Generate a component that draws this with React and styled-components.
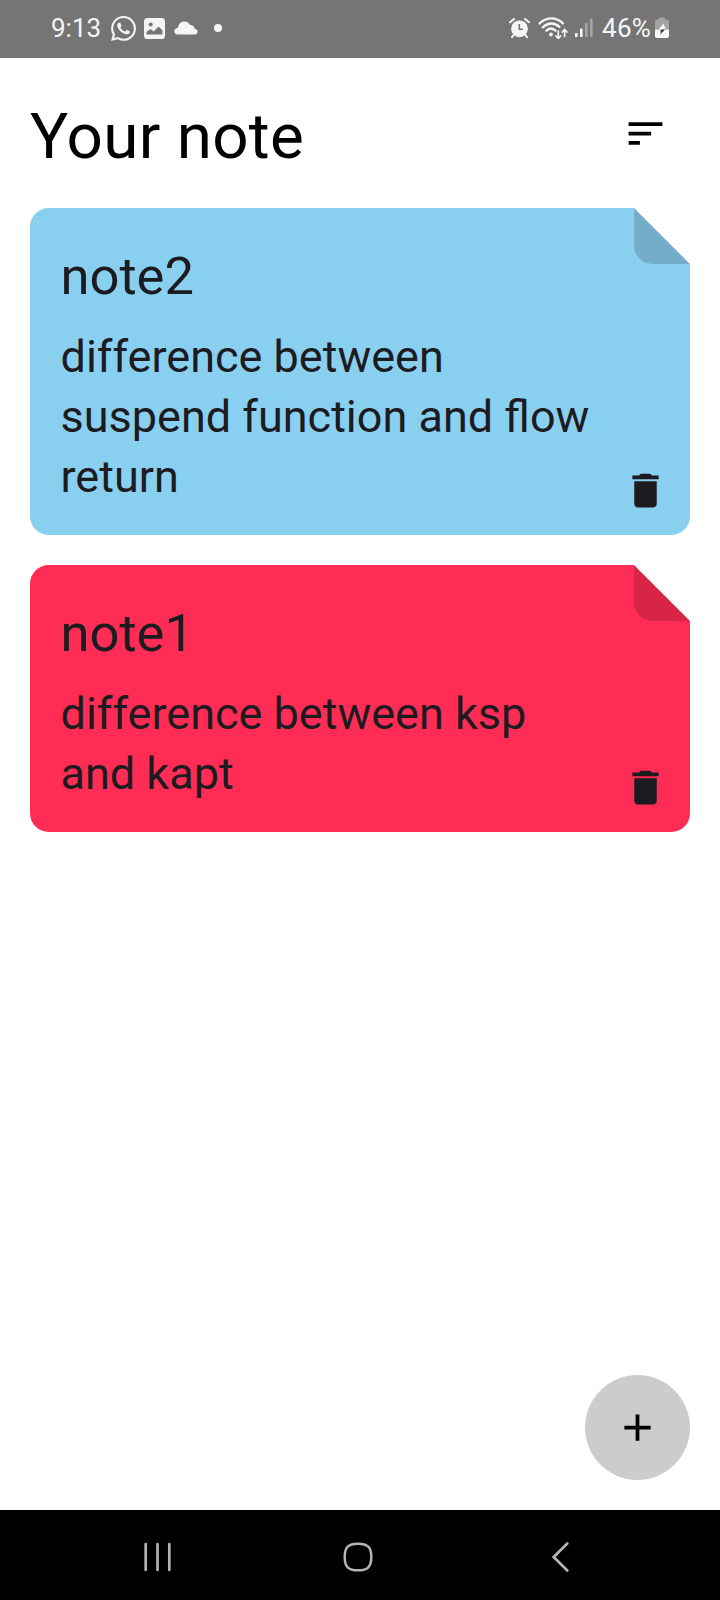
import React from "react";
import styled, { createGlobalStyle } from "styled-components";
import { SiWhatsapp } from "react-icons/si";

const GlobalStyle = createGlobalStyle`
  * { box-sizing: border-box; }
  body { margin: 0; background: #fff; font-family: Roboto, "Liberation Sans", sans-serif; }
  button { border: 0; padding: 0; background: none; font: inherit; color: inherit; }
  svg { display: block; flex: none; }
`;

const Screen = styled.div`
  width: 720px;
  height: 1600px;
  display: flex;
  flex-direction: column;
  background: #fff;
  overflow: hidden;
`;

const StatusBar = styled.header`
  flex: none;
  height: 58px;
  padding: 0 51px 2px;
  display: flex;
  align-items: center;
  justify-content: space-between;
  background: #757575;
  color: #f5f5f5;
`;

const StatusGroup = styled.div`
  display: flex;
  align-items: center;
`;

const StatusText = styled.span`
  width: ${(p) => p.$width}px;
  font-size: 26px;
  line-height: 30px;
  letter-spacing: ${(p) => p.$tracking}px;
  white-space: nowrap;
`;

const StatusIcon = styled.span`
  margin-left: ${(p) => p.$gap}px;
`;

const Content = styled.main`
  flex: 1;
  min-height: 0;
  padding: 30px;
  display: flex;
  flex-direction: column;
`;

const TitleRow = styled.div`
  flex: none;
  height: 90px;
  margin-bottom: 30px;
  display: flex;
  align-items: center;
  justify-content: space-between;
`;

const PageTitle = styled.h1`
  margin: 0;
  padding-top: 7px;
  font-size: 63.75px;
  line-height: 83px;
  font-weight: 400;
  letter-spacing: 0.3px;
  color: #000;
`;

const IconButton = styled.button`
  flex: none;
  width: 90px;
  height: 90px;
  display: flex;
  align-items: center;
  justify-content: center;
`;

const NoteList = styled.div`
  display: flex;
  flex-direction: column;
  gap: 30px;
`;

const NoteCard = styled.article`
  position: relative;
  padding: 32px 90px 28px 30.5px;
  border-radius: 18.75px;
  background: ${(p) => p.$color};
  color: #1c1b1f;
  clip-path: polygon(0 0, calc(100% - 56.25px) 0, 100% 56.25px, 100% 100%, 0 100%);

  &::after {
    content: "";
    position: absolute;
    top: 0;
    right: 0;
    width: 56.25px;
    height: 56.25px;
    border-bottom-left-radius: 18.75px;
    background: ${(p) => p.$fold};
  }
`;

const NoteTitle = styled.h2`
  margin: 0;
  height: 87px;
  font-size: 52.5px;
  line-height: 72px;
  font-weight: 400;
`;

const NoteText = styled.p`
  margin: 0;
  font-size: 45px;
  line-height: 60px;
`;

const DeleteButton = styled(IconButton)`
  position: absolute;
  right: 0;
  bottom: 0;
`;

const AddButton = styled.button`
  flex: none;
  width: 105px;
  height: 105px;
  margin: auto 0 0 auto;
  border-radius: 50%;
  display: flex;
  align-items: center;
  justify-content: center;
  background: #ccc;
`;

const NavBar = styled.nav`
  flex: none;
  height: 90px;
  padding: 3px 151px 0 143px;
  display: flex;
  align-items: center;
  justify-content: space-between;
  background: #000;
`;

const NavHome = styled.span`
  margin-right: 8px;
`;

const MaterialIcon = ({ d }) => (
  <svg width="45" height="45" viewBox="0 0 24 24" fill="currentColor">
    <path d={d} />
  </svg>
);

const SORT = "M3 18h6v-2H3v2zM3 6v2h18V6H3zm0 7h12v-2H3v2z";
const DELETE = "M6 19c0 1.1.9 2 2 2h8c1.1 0 2-.9 2-2V7H6v12zM19 4h-3.5l-1-1h-5l-1 1H5v2h14V4z";
const ADD = "M19 13h-6v6h-2v-6H5v-2h6V5h2v6h6v2z";

const PictureIcon = () => (
  <svg width="21" height="21" viewBox="0 0 21 21">
    <rect width="21" height="21" rx="3.6" fill="currentColor" />
    <circle cx="6.7" cy="6.6" r="2" fill="#757575" />
    <path d="M2.5 16.5V14l4-3 3.2 2.6 4.8-5.2 4 4.1v4z" fill="#757575" />
  </svg>
);

const CloudIcon = () => (
  <svg width="24" height="14" viewBox="0 0 24 14" fill="currentColor">
    <path d="M3.8 13.5C1.5 13.5.3 12 .3 10.2.3 8.4 1.9 7 3.8 7 4.3 3 7 .4 10.4.4c2.8 0 4.7 1.4 5.7 3.7 2.6-.1 4.3 1.5 4.6 3.7 1.8.2 2.9 1.3 2.9 2.9 0 1.7-1.2 2.8-3 2.8z" />
  </svg>
);

const DotIcon = () => (
  <svg width="8" height="8" viewBox="0 0 8 8" fill="currentColor">
    <circle cx="4" cy="4" r="4" />
  </svg>
);

const AlarmIcon = () => (
  <svg width="21" height="21" viewBox="0 0 21 21" fill="none">
    <circle cx="10.5" cy="10.8" r="8.4" fill="currentColor" />
    <path d="M1 4.3 5 1M16 1l4 3.3M5 16.5l-2 2.7M16 16.5l2 2.7" stroke="currentColor" strokeWidth="2" strokeLinecap="round" />
    <path d="M10.3 6v5.3H14" stroke="#757575" strokeWidth="1.6" />
  </svg>
);

const WifiIcon = () => (
  <svg width="30" height="22" viewBox="0 0 30 22" fill="none" stroke="currentColor" strokeWidth="2.3" strokeLinecap="round">
    <path d="M1.5 6.5C8.5-.4 18.300-.4 25 6.5M4.800 10.300c5.200-5 11.700-5 16.600-.5M8.500 13.700c2.800-2.600 6.300-2.600 9 0" />
    <circle cx="13" cy="17.5" r="1.9" fill="currentColor" stroke="none" />
    <path d="M20.3 14v7M18 19l2.300 2.500L22.600 19M26.600 19.500V13M24.300 15l2.300-2.500L28.900 15" strokeWidth="1.7" />
  </svg>
);

const SignalIcon = () => (
  <svg width="18" height="20" viewBox="0 0 18 20" fill="currentColor">
    <rect x="0" y="15" width="2.6" height="4" rx=".6" />
    <rect x="5" y="10.5" width="2.6" height="8.5" rx=".6" />
    <rect x="10" y="5" width="2.6" height="14" rx=".6" opacity=".38" />
    <rect x="15" y=".5" width="2.6" height="18.5" rx=".6" opacity=".38" />
  </svg>
);

const BatteryIcon = () => (
  <svg width="14" height="22" viewBox="0 0 14 22">
    <path d="M4 .5h6v2h2c1.200 0 2 .8 2 2v8H0v-8c0-1.200.8-2 2-2h2z" fill="#a4a4a4" />
    <path d="M0 12.500h14V19c0 1.200-.8 2-2 2H2c-1.200 0-2-.8-2-2z" fill="#fafafa" />
    <path d="M8.500 6.500 3.700 12.500H7l3.600-.2z" fill="#fafafa" />
    <path d="M7 12.500h3L5 17.800l1.200-3.500H4.300z" fill="#333" />
  </svg>
);

const RecentsIcon = () => (
  <svg width="29" height="30" viewBox="0 0 29 30" stroke="#b4b4b4" strokeWidth="2.7" strokeLinecap="round">
    <path d="M2.700 2v26M14.500 2v26M26.300 2v26" />
  </svg>
);

const HomeIcon = () => (
  <svg width="30" height="30" viewBox="0 0 30 30" fill="none" stroke="#b4b4b4" strokeWidth="2.5">
    <path d="M15 1.700c9.800 0 13.300 3.500 13.300 13.300S24.800 28.300 15 28.300 1.700 24.800 1.700 15 5.200 1.700 15 1.700z" />
  </svg>
);

const BackIcon = () => (
  <svg width="17" height="30" viewBox="0 0 17 30" fill="none" stroke="#b4b4b4" strokeWidth="2.6" strokeLinecap="round">
    <path d="M15.300 1.500 1.700 15l13.600 13.500" />
  </svg>
);

const notes = [
  { title: "note2", text: "difference between suspend function and flow return", color: "#89cff0", fold: "#73adca" },
  { title: "note1", text: "difference between ksp and kapt", color: "#ff2c55", fold: "#d62547" },
];

export default function App() {
  return (
    <Screen>
      <GlobalStyle />
      <StatusBar>
        <StatusGroup>
          <StatusText $width={60} $tracking={0}>9:13</StatusText>
          <StatusIcon $gap={0}><SiWhatsapp size={25} /></StatusIcon>
          <StatusIcon $gap={8}><PictureIcon /></StatusIcon>
          <StatusIcon $gap={8.5}><CloudIcon /></StatusIcon>
          <StatusIcon $gap={16}><DotIcon /></StatusIcon>
        </StatusGroup>
        <StatusGroup>
          <StatusIcon $gap={0}><AlarmIcon /></StatusIcon>
          <StatusIcon $gap={8}><WifiIcon /></StatusIcon>
          <StatusIcon $gap={7}><SignalIcon /></StatusIcon>
          <StatusIcon $gap={9}><StatusText as="div" $width={53} $tracking={0.3}>46%</StatusText></StatusIcon>
          <StatusIcon $gap={0}><BatteryIcon /></StatusIcon>
        </StatusGroup>
      </StatusBar>
      <Content>
        <TitleRow>
          <PageTitle>Your note</PageTitle>
          <IconButton aria-label="Sort"><MaterialIcon d={SORT} /></IconButton>
        </TitleRow>
        <NoteList>
          {notes.map((note) => (
            <NoteCard key={note.title} $color={note.color} $fold={note.fold}>
              <NoteTitle>{note.title}</NoteTitle>
              <NoteText>{note.text}</NoteText>
              <DeleteButton aria-label="Delete"><MaterialIcon d={DELETE} /></DeleteButton>
            </NoteCard>
          ))}
        </NoteList>
        <AddButton aria-label="Add"><MaterialIcon d={ADD} /></AddButton>
      </Content>
      <NavBar>
        <RecentsIcon />
        <NavHome><HomeIcon /></NavHome>
        <BackIcon />
      </NavBar>
    </Screen>
  );
}
